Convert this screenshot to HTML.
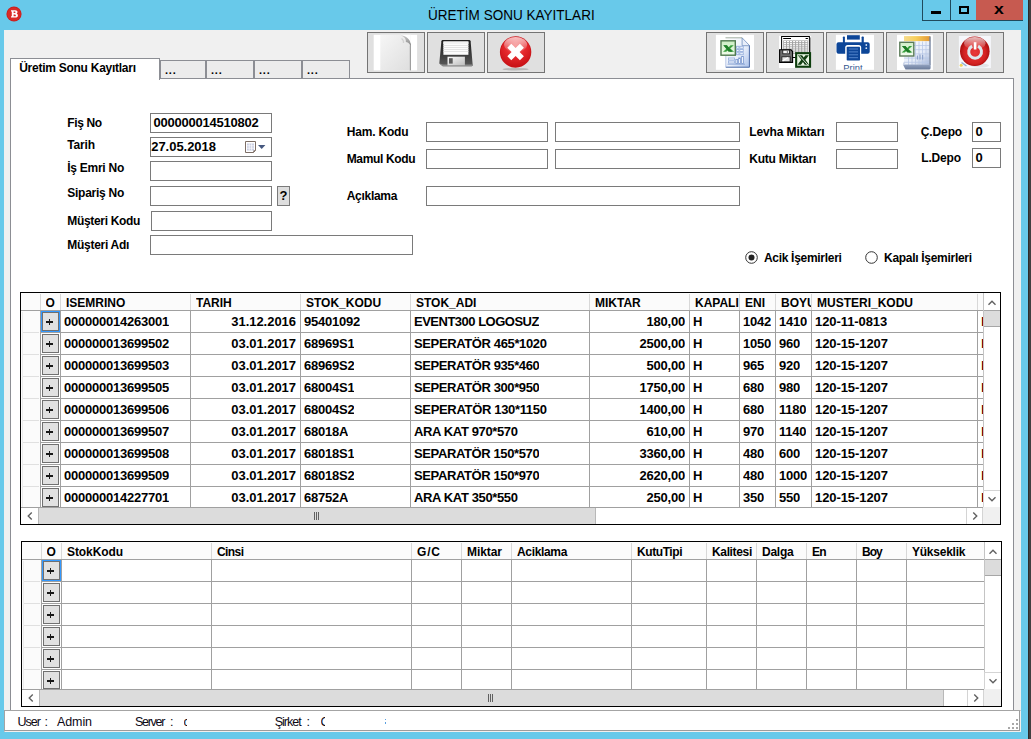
<!DOCTYPE html>
<html><head><meta charset="utf-8">
<style>
*{box-sizing:border-box;margin:0;padding:0}
html,body{width:1031px;height:739px;overflow:hidden}
body{background:#68c9ea;font-family:"Liberation Sans",sans-serif;position:relative;color:#000}
.abs,.abs *{position:absolute}
#win{position:absolute;left:0;top:0;width:1031px;height:739px;overflow:hidden}
#win div,#win span,#win svg{position:absolute}
#title{left:428px;top:4.600px;font-size:15.500px;line-height:20px;white-space:nowrap;color:#000;transform-origin:0 0;transform:scaleX(0.873)}
#client{left:4px;top:29.600px;width:1017px;height:702.400px;background:#f0f0f0}
#edge{left:1028px;top:0;width:3px;height:739px;background:#404040;border-left:1px solid #2b2b2b}
.cap{top:0;height:21px;border:1px solid #1f4a5c;border-top:none}
.tb{top:32px;width:58px;height:41px;background:#e0e0e0;border:1px solid #747474}
.tab{top:60px;height:18px;background:#ececec;border:1px solid #8c8e94;border-bottom:none;font-size:11px;font-weight:bold}
#page{left:10px;top:78px;width:1004px;height:634px;background:#fff;border:1px solid #8c8e94}
.lbl{font-size:12px;font-weight:bold;line-height:14px;white-space:nowrap}
.inp{background:#fff;border:1px solid #7a7a7a;height:20px;font-size:13px;font-weight:bold;line-height:17px;padding-left:2.400px;letter-spacing:-0.23px;white-space:nowrap;overflow:hidden}
.grid{background:#fff;border:1px solid #000}
.gt{height:16px;line-height:16px;font-weight:bold;white-space:nowrap;overflow:hidden}
.gh{top:0;height:17px;background:#fafafa;border-right:1px solid #b4b4b4;border-bottom:1px solid #a0a0a0;font-weight:bold;white-space:nowrap;overflow:hidden}
.hl{height:1px;background:#a0a0a0;left:0}
.vl{width:1px;background:#a0a0a0}
.c{font-size:13px;font-weight:bold;line-height:22px;white-space:nowrap;height:21px;letter-spacing:-0.23px;overflow:hidden}
.pb{width:17px;height:18px;background:#e1e1e1;border:1px solid #707070;font-size:11px;font-weight:bold;text-align:center;line-height:16px}
#status{left:4px;top:710px;width:1017px;height:22px;background:#fff;border:1px solid #a4a4a4;border-right:1px solid #f4efed;border-bottom:1px solid #f4efed;box-shadow:inset -1px -1px 0 #9c9c9c}
.st{font-size:12.500px;line-height:14px;top:3.500px;white-space:nowrap;color:#0c0814}
</style></head><body>
<div id="win">
<div id="edge"></div>
<!-- titlebar -->
<svg style="left:6px;top:6px" width="16" height="16" viewBox="0 0 16 16"><circle cx="8" cy="8" r="7.6" fill="#c9201f"/><circle cx="8" cy="8" r="6.6" fill="#d92b27"/><path d="M5 4.2h4.2c1.5 0 2.3.7 2.3 1.8 0 .8-.4 1.4-1.2 1.6 1 .2 1.6.9 1.6 1.9 0 1.400-1 2.1-2.600 2.100H5v-1.3h.8V5.500H5z M7.600 5.600v1.500h1.100c.6 0 .9-.3.9-.8s-.3-.7-.9-.7z M7.600 8.500v1.800h1.300c.7 0 1-.4 1-.9 0-.6-.4-.9-1.100-.9z" fill="#fff" fill-rule="evenodd"/></svg>
<div id="title">ÜRETİM SONU KAYITLARI</div>
<div class="cap" style="left:922px;width:29px"><div style="left:8px;top:11px;width:10px;height:3px;background:#000"></div></div>
<div class="cap" style="left:950px;width:27px"><div style="left:8px;top:6px;width:10px;height:8px;border:2px solid #000"></div></div>
<div class="cap" style="left:976px;width:47px;background:#c75a50;border-left:none;border-right:none"><div style="left:18.500px;top:0px;font-size:14.500px;font-weight:bold;line-height:18px;transform:scaleX(1.22)">x</div></div>
<div id="client"></div>
<div class="tb" style="left:367px"><svg style="left:-1px;top:-1px" width="58" height="41" viewBox="0 0 58 41"><defs><linearGradient id="pg0" x1="0" y1="0" x2="1" y2="1"><stop offset="0" stop-color="#f6f6f6"/><stop offset="1" stop-color="#dedede"/></linearGradient><linearGradient id="cl0" x1="0" y1="0" x2="1" y2="1"><stop offset="0" stop-color="#c8c8c8"/><stop offset="1" stop-color="#7a7a7a"/></linearGradient></defs>
<rect x="6.700" y="2.800" width="43.400" height="35.600" fill="#fff"/>
<rect x="13.300" y="2.800" width="30.300" height="35.600" fill="url(#pg0)"/>
<path d="M34 2.800H43.600V12z" fill="#fff"/>
<path d="M33.800 3.200C38 3.600 43.200 6.500 43.600 11.800L43.600 13.500C41.800 10.800 40.500 10.200 38.800 10C39.500 7.500 37.500 4.800 33.800 3.200z" fill="url(#cl0)" opacity="0.850"/>
<path d="M34.500 6.500C36 7.500 36.800 9 36.500 11" stroke="#d0d0d0" stroke-width="1.200" fill="none"/>
<rect x="42.900" y="11.500" width="0.900" height="26.900" fill="#8c8c8c"/>
<rect x="42" y="14" width="0.900" height="24.400" fill="#d4d4d4"/>
</svg></div>
<div class="tb" style="left:427px"><svg style="left:-1px;top:-1px" width="58" height="41" viewBox="0 0 58 41"><defs><linearGradient id="fb" x1="0" y1="0" x2="0" y2="1"><stop offset="0" stop-color="#1e1e1e"/><stop offset="0.550" stop-color="#3c3c3c"/><stop offset="1" stop-color="#5a5a5a"/></linearGradient><linearGradient id="fs" x1="0" y1="0" x2="1" y2="1"><stop offset="0" stop-color="#fafafa"/><stop offset="1" stop-color="#bdbdbd"/></linearGradient></defs>
<path d="M15.600 8.100H42.200Q43.400 8.100 43.600 9.300L45.700 33Q45.800 34.300 44.500 34.300H15.800L12.300 31.500L14.400 9.300Q14.600 8.100 15.600 8.100z" fill="url(#fb)"/>
<path d="M12.300 31.500L15.800 34.300H44.500Q45.800 34.300 45.700 33L45.600 32.400H15.900z" fill="#8a8a8a"/>
<rect x="16.400" y="9.500" width="25" height="13.300" fill="#fcfcfc"/>
<path d="M16.400 13.500h25M16.400 15.500h25M16.400 17.500h25M16.400 19.500h25" stroke="#dcdcdc" stroke-width="0.800"/>
<rect x="16.400" y="9.500" width="25" height="2.500" fill="#f2f2f2"/>
<rect x="20.500" y="24.700" width="17.400" height="8.600" fill="url(#fs)"/>
<rect x="22" y="26.200" width="3.700" height="5.400" fill="#5c5c5c"/>
</svg></div>
<div class="tb" style="left:487px"><svg style="left:-1px;top:-1px" width="58" height="41" viewBox="0 0 58 41"><defs><radialGradient id="rx" cx="0.500" cy="0.300" r="0.750"><stop offset="0" stop-color="#f47a7a"/><stop offset="0.450" stop-color="#e62a2e"/><stop offset="1" stop-color="#c40d12"/></radialGradient><linearGradient id="rxh" x1="0" y1="0" x2="0" y2="1"><stop offset="0" stop-color="#fff" stop-opacity="0.700"/><stop offset="1" stop-color="#fff" stop-opacity="0.050"/></linearGradient></defs>
<ellipse cx="28.600" cy="37.200" rx="13" ry="1.300" fill="#b8b8b8"/>
<circle cx="28.600" cy="20" r="15.700" fill="#c9151a"/>
<circle cx="28.600" cy="20" r="14.900" fill="url(#rx)"/>
<ellipse cx="28.600" cy="12.500" rx="11.500" ry="7.500" fill="url(#rxh)"/>
<path d="M20.3 15.7L24.3 11.7L28.6 16.0L32.9 11.7L36.9 15.7L32.6 20.0L36.9 24.3L32.9 28.3L28.6 24.0L24.3 28.3L20.3 24.3L24.6 20.0z" fill="#fff"/>
</svg></div>
<div class="tb" style="left:706px"><svg style="left:-1px;top:-1px" width="58" height="41" viewBox="0 0 58 41"><defs><linearGradient id="xp" x1="0" y1="0" x2="1" y2="1"><stop offset="0" stop-color="#ffffff"/><stop offset="0.550" stop-color="#eaf0fb"/><stop offset="1" stop-color="#a9c0ea"/></linearGradient><linearGradient id="xg" x1="0" y1="0" x2="0" y2="1"><stop offset="0" stop-color="#cdeec4"/><stop offset="1" stop-color="#effbe9"/></linearGradient></defs>
<rect x="9.900" y="2.800" width="38.100" height="35" fill="#fff"/>
<path d="M19.500 5.800H36.100L43.700 13.700V35.500H19.500z" fill="url(#xp)"/>
<path d="M36.100 5.800V13.700H43.700z" fill="#e8eefa" stroke="#5f7fb5" stroke-width="0.700"/>
<path d="M19.500 5.800H36.100" stroke="#8a9a8a" stroke-width="0.800"/>
<path d="M43.400 13.700V35.200H19.800" stroke="#4b6aa5" stroke-width="1" fill="none"/>
<path d="M19.800 23.900V35.200" stroke="#9fb5dd" stroke-width="0.700"/>
<g stroke="#9ab2de" stroke-width="0.900" fill="#f4f8ff"><rect x="30.500" y="14.300" width="2.500" height="2"/><rect x="33.800" y="14.300" width="3.500" height="2"/><rect x="30.500" y="17.500" width="2.500" height="2"/><rect x="33.800" y="17.500" width="3.500" height="2"/><rect x="30.500" y="20.700" width="2.500" height="2"/><rect x="33.800" y="20.700" width="3.500" height="2"/><rect x="22.500" y="26" width="6" height="2"/><rect x="22.500" y="29" width="6" height="2"/></g>
<g fill="#eef3fc" stroke="#7f9bd0" stroke-width="0.800"><rect x="29.800" y="27.500" width="1.800" height="4"/><rect x="32.600" y="26" width="1.800" height="5.500"/><rect x="35.600" y="24.500" width="1.800" height="7"/></g>
<path d="M21.500 32.200H39" stroke="#7f9bd0" stroke-width="0.800"/>
<rect x="14.300" y="8.100" width="15.700" height="15.800" fill="#4f7a4f"/>
<rect x="15.700" y="9.500" width="12.900" height="13" fill="url(#xg)"/>
<g transform="translate(0 3.600) scale(1 0.780)"><path d="M17.300 12.500h3.600l1.700 2.300 2-2.300h3.200l-3.600 4 3.900 4.300h-3.700l-2-2.500-2.200 2.500h-3.200l3.800-4.300z" fill="#3aa040"/>
<path d="M17.300 12.500h3.600l5.400 8.300h-3.700z" fill="#1f8028"/></g>
</svg></div>
<div class="tb" style="left:766px"><svg style="left:-1px;top:-1px" width="58" height="41" viewBox="0 0 58 41">
<rect x="13.100" y="3.800" width="32" height="32.200" fill="#fff"/>
<rect x="15.600" y="4.500" width="27.800" height="21" fill="#fff" stroke="#000" stroke-width="1"/>
<path d="M44.400 5.500V25" stroke="#777" stroke-width="0.800"/>
<rect x="17.200" y="6" width="7.800" height="1" fill="#000"/><rect x="39.600" y="6" width="2.300" height="1" fill="#000"/>
<rect x="17.200" y="8.400" width="24.700" height="13.400" fill="#a4a4a4"/>
<g fill="#fff"><rect x="18" y="9" width="2" height="1.200"/><rect x="21" y="9" width="2" height="1.200"/><rect x="24" y="9" width="2" height="1.200"/><rect x="27.100" y="9" width="2" height="1.200"/><rect x="30.100" y="9" width="2" height="1.200"/><rect x="33.200" y="9" width="2" height="1.200"/><rect x="36.200" y="9" width="2" height="1.200"/><rect x="39.300" y="9" width="2" height="1.200"/>
<rect x="18" y="11.100" width="2" height="1.200"/><rect x="21" y="11.100" width="2" height="1.200"/><rect x="24" y="11.100" width="2" height="1.200"/><rect x="27.100" y="11.100" width="2" height="1.200"/><rect x="30.100" y="11.100" width="2" height="1.200"/><rect x="33.200" y="11.100" width="2" height="1.200"/><rect x="36.200" y="11.100" width="2" height="1.200"/><rect x="39.300" y="11.100" width="2" height="1.200"/>
<rect x="18" y="13.200" width="2" height="1.200"/><rect x="21" y="13.200" width="2" height="1.200"/><rect x="24" y="13.200" width="2" height="1.200"/><rect x="27.100" y="13.200" width="2" height="1.200"/><rect x="30.100" y="13.200" width="2" height="1.200"/><rect x="33.200" y="13.200" width="2" height="1.200"/><rect x="36.200" y="13.200" width="2" height="1.200"/><rect x="39.300" y="13.200" width="2" height="1.200"/>
<rect x="18" y="15.300" width="2" height="1.200"/><rect x="21" y="15.300" width="2" height="1.200"/><rect x="24" y="15.300" width="2" height="1.200"/><rect x="27.100" y="15.300" width="2" height="1.200"/><rect x="30.100" y="15.300" width="2" height="1.200"/><rect x="33.200" y="15.300" width="2" height="1.200"/><rect x="36.200" y="15.300" width="2" height="1.200"/><rect x="39.300" y="15.300" width="2" height="1.200"/>
<rect x="27.100" y="17.400" width="2" height="1.200"/><rect x="30.100" y="17.400" width="2" height="1.200"/><rect x="33.200" y="17.400" width="2" height="1.200"/><rect x="36.200" y="17.400" width="2" height="1.200"/><rect x="39.300" y="17.400" width="2" height="1.200"/>
<rect x="27.100" y="19.500" width="2" height="1.200"/><rect x="30.100" y="19.500" width="2" height="1.200"/><rect x="33.200" y="19.500" width="2" height="1.200"/><rect x="36.200" y="19.500" width="2" height="1.200"/><rect x="39.300" y="19.500" width="2" height="1.200"/></g>
<path d="M13.600 17.700H24.800L26.600 19.500V30.400H13.600z" fill="#6e6e6e" stroke="#000" stroke-width="1.100"/>
<rect x="16.800" y="18.100" width="6.600" height="3.700" fill="#f4f4f4" stroke="#111" stroke-width="0.800"/>
<rect x="20.800" y="18.600" width="1.300" height="2.500" fill="#888"/>
<rect x="15.900" y="24.800" width="8.200" height="5" fill="#e4e4e4" stroke="#111" stroke-width="0.800"/>
<path d="M16.500 29L22 25.500" stroke="#fff" stroke-width="1.200"/>
<rect x="29.100" y="20.100" width="16" height="15.700" fill="#0d3d0d"/>
<rect x="31.200" y="22.200" width="11.800" height="11.500" fill="#e9f7e4"/>
<path d="M31.800 23.200h4.300l1.600 2.300 1.800-2.300h3.400l-3.500 4.500 3.600 5h-4.300l-1.700-2.600-2 2.600h-3.500l3.800-5z" fill="#123f12"/>
<path d="M33.200 23.400L41.800 33" stroke="#fff" stroke-width="0.800"/>
</svg></div>
<div class="tb" style="left:826px"><svg style="left:-1px;top:-1px" width="58" height="41" viewBox="0 0 58 41">
<rect x="9.900" y="2.800" width="38.100" height="35" fill="#fff"/>
<g fill="#0d4698">
<rect x="21" y="3.200" width="12.800" height="4.400"/>
<rect x="16.900" y="4.400" width="2" height="7" rx="0.800"/><rect x="35.600" y="4.400" width="2.200" height="7" rx="0.800"/>
<path d="M12.500 10.200H41.700Q43.700 10.200 43.700 12.200V19.800Q43.700 21.800 41.700 21.800H35.200V15.600Q35.200 13.100 32.700 13.100H21.700Q19.200 13.100 19.200 15.600V21.800H12.500Q10.500 21.800 10.500 19.800V12.200Q10.500 10.200 12.500 10.200z"/>
<rect x="20.700" y="14.800" width="13.300" height="13.700" rx="0.800"/>
</g>
<g stroke="#5f8fd4" stroke-width="1" opacity="0.850"><path d="M22.800 17h9.200M22.800 19.900h9.200M22.800 22.800h9.200M22.800 25.700h9.200"/></g>
<circle cx="40.300" cy="13" r="0.900" fill="#d6e2f4"/><circle cx="40.300" cy="16.200" r="0.900" fill="#d6e2f4"/>
<clipPath id="pc"><rect x="9.900" y="2.800" width="38.100" height="35"/></clipPath>
<text x="17.300" y="39" font-family="Liberation Sans, sans-serif" font-size="9.400" fill="#35568f" clip-path="url(#pc)">Print</text>
</svg></div>
<div class="tb" style="left:886px"><svg style="left:-1px;top:-1px" width="58" height="41" viewBox="0 0 58 41"><defs><linearGradient id="og" x1="0" y1="0" x2="1" y2="0"><stop offset="0" stop-color="#f6dc8c"/><stop offset="0.450" stop-color="#f7cf5c"/><stop offset="1" stop-color="#e39834"/></linearGradient><linearGradient id="tg" x1="0" y1="0" x2="1" y2="1"><stop offset="0" stop-color="#ffffff"/><stop offset="0.600" stop-color="#e6ecf8"/><stop offset="1" stop-color="#a8b8d8"/></linearGradient><linearGradient id="bg6" x1="0" y1="0" x2="0" y2="1"><stop offset="0" stop-color="#93a3c1"/><stop offset="1" stop-color="#6a7a98"/></linearGradient><linearGradient id="xg2" x1="0" y1="0" x2="0" y2="1"><stop offset="0" stop-color="#d2efc9"/><stop offset="1" stop-color="#f1fbec"/></linearGradient></defs>
<rect x="11" y="2.800" width="35.900" height="35.300" fill="#fff"/>
<rect x="18" y="4.100" width="26.200" height="5.300" fill="url(#og)"/>
<rect x="18" y="9.300" width="25.600" height="23.400" fill="url(#tg)"/>
<g stroke="#b9c8e6" stroke-width="0.800" fill="none"><path d="M18 13.500h25.400M18 17.700h25.400M18 21.900h25.400M18 26.100h25.400M18 30.300h25.400"/><path d="M29.500 9.500v23M33 9.500v23M36.500 9.500v23M40 9.500v23M22.500 25v8M26 25v8"/></g>
<path d="M30.800 23.500h1.200v4h-1.200zM33.400 22.500h1.200v5h-1.200zM36 23h1.200v4.500H36z" fill="#8fa3cc"/>
<path d="M43.300 4.400H44.700V33H43.300z" fill="#76849f"/>
<path d="M16.900 32.600H44.600V36Q44.600 37.500 43 37.500H19.500z" fill="url(#bg6)"/>
<path d="M18 29.500L16.700 32.600H19z" fill="#c5cfe4"/>
<rect x="13.100" y="9.600" width="15.400" height="15.100" fill="#5a7a58"/>
<rect x="14.500" y="11" width="12.600" height="12.300" fill="url(#xg2)"/>
<g transform="translate(0 3.400) scale(1 0.800)"><path d="M16 13.300h3.400l1.800 2.300 2-2.300h3l-3.600 4 3.900 4.200h-3.600l-2-2.500-2.200 2.500h-3.100l3.800-4.200z" fill="#38a03e"/>
<path d="M16 13.300h3.400l5.500 8.200h-3.600z" fill="#1d7a24"/></g>
</svg></div>
<div class="tb" style="left:946px"><svg style="left:-1px;top:-1px" width="58" height="41" viewBox="0 0 58 41"><defs><radialGradient id="pr" cx="0.500" cy="0.550" r="0.550"><stop offset="0" stop-color="#e83a3a"/><stop offset="0.700" stop-color="#d42222"/><stop offset="1" stop-color="#a30f0f"/></radialGradient><linearGradient id="prh" x1="0" y1="0" x2="0" y2="1"><stop offset="0" stop-color="#fff" stop-opacity="0.750"/><stop offset="1" stop-color="#fff" stop-opacity="0"/></linearGradient></defs>
<rect x="12.900" y="4" width="32" height="32.100" fill="#f5f7fb"/>
<ellipse cx="34" cy="33.500" rx="9" ry="2" fill="#e2e4e8"/>
<path d="M15.500 30.500L20.500 34" stroke="#8fb0d8" stroke-width="1.500"/>
<circle cx="15.200" cy="33.300" r="1.500" fill="#efd45a"/>
<circle cx="28.800" cy="19.300" r="14.800" fill="#b81212"/>
<circle cx="28.800" cy="19.300" r="14" fill="url(#pr)"/>
<ellipse cx="28.800" cy="11.300" rx="10.800" ry="6.300" fill="url(#prh)"/>
<path d="M26.100 14.150A6.400 6.400 0 1 0 32.100 14.150" fill="none" stroke="#dde9ee" stroke-width="3" stroke-linecap="butt"/>
<rect x="27.800" y="10.200" width="2.600" height="7.300" fill="#fff"/>
</svg></div>
<div id="page"></div>
<div class="tab" style="left:160px;width:46px"><span style="left:4px;top:2px;line-height:14px;letter-spacing:0.8px">...</span></div>
<div class="tab" style="left:206px;width:48px"><span style="left:4px;top:2px;line-height:14px;letter-spacing:0.8px">...</span></div>
<div class="tab" style="left:254px;width:48px"><span style="left:4px;top:2px;line-height:14px;letter-spacing:0.8px">...</span></div>
<div class="tab" style="left:302px;width:48px"><span style="left:4px;top:2px;line-height:14px;letter-spacing:0.8px">...</span></div>
<div class="tab" style="left:10px;top:58px;width:150px;height:22px;background:#fff;z-index:2"><span style="left:8.200px;top:2px;line-height:14px;font-size:12px;letter-spacing:-0.26px;white-space:nowrap">Üretim Sonu Kayıtları</span></div>
<div class="lbl" style="left:67.3px;top:116px;letter-spacing:-0.38px">Fiş No</div>
<div class="lbl" style="left:67.3px;top:138px;letter-spacing:-0.19px">Tarih</div>
<div class="lbl" style="left:67.3px;top:161px;letter-spacing:-0.27px">İş Emri No</div>
<div class="lbl" style="left:67.3px;top:186px;letter-spacing:-0.27px">Sipariş No</div>
<div class="lbl" style="left:67.3px;top:214px;letter-spacing:-0.33px">Müşteri Kodu</div>
<div class="lbl" style="left:67.3px;top:238px;letter-spacing:-0.28px">Müşteri Adı</div>
<div class="lbl" style="left:346.7px;top:125px;letter-spacing:-0.18px">Ham. Kodu</div>
<div class="lbl" style="left:346.7px;top:152px;letter-spacing:-0.34px">Mamul Kodu</div>
<div class="lbl" style="left:346.7px;top:189px;letter-spacing:-0.29px">Açıklama</div>
<div class="lbl" style="left:749.2px;top:125px;letter-spacing:-0.11px">Levha Miktarı</div>
<div class="lbl" style="left:749.2px;top:152px;letter-spacing:-0.21px">Kutu Miktarı</div>
<div class="lbl" style="left:920.7px;top:125px;letter-spacing:-0.10px">Ç.Depo</div>
<div class="lbl" style="left:921.3px;top:151px;letter-spacing:-0.20px">L.Depo</div>
<div class="lbl" style="left:763.9px;top:251px;letter-spacing:-0.29px">Acik İşemirleri</div>
<div class="lbl" style="left:884.1px;top:251px;letter-spacing:-0.30px">Kapalı İşemirleri</div>
<div class="inp" style="left:150px;top:113px;width:122px">000000014510802</div>
<div class="inp" style="left:150px;top:137px;width:122px"><span style="position:static;margin-left:-2.2px;letter-spacing:-0.03px">27.05.2018</span></div>
<div class="inp" style="left:150px;top:161px;width:122px"></div>
<div class="inp" style="left:150px;top:186px;width:122px"></div>
<div class="inp" style="left:151px;top:211px;width:121px"></div>
<div class="inp" style="left:150px;top:235px;width:263px"></div>
<div class="inp" style="left:426px;top:122px;width:122px"></div>
<div class="inp" style="left:555px;top:122px;width:185px"></div>
<div class="inp" style="left:426px;top:149px;width:122px"></div>
<div class="inp" style="left:555px;top:149px;width:185px"></div>
<div class="inp" style="left:426px;top:186px;width:314px"></div>
<div class="inp" style="left:836px;top:122px;width:62px"></div>
<div class="inp" style="left:836px;top:149px;width:62px"></div>
<div class="inp" style="left:972px;top:122px;width:29px">0</div>
<div class="inp" style="left:972px;top:148px;width:29px">0</div>
<svg style="left:244px;top:140px" width="24" height="14" viewBox="0 0 24 14"><path d="M1.500 1.500H11.500V10.500L9.500 12.500H1.500z" fill="#fff" stroke="#7d6e66" stroke-width="1"/><path d="M9.500 12.500V10.500H11.500" fill="none" stroke="#7d6e66" stroke-width="0.800"/><rect x="3" y="3.500" width="7" height="7" fill="#c9cde2"/><path d="M5.200 3.500v7M7.600 3.500v7M3 5.800h7M3 8.200h7" stroke="#fff" stroke-width="0.700"/><path d="M14 5h7.400l-3.700 4z" fill="#46587f"/></svg>
<div style="left:277px;top:186px;width:13px;height:20px;background:#dedede;border:1px solid #7a7a7a;font-size:13px;font-weight:bold;line-height:18px;text-align:center"><span style="left:1.500px;top:0">?</span></div>
<svg style="left:744.500px;top:250.500px" width="13" height="13" viewBox="0 0 13 13"><circle cx="6.500" cy="6.500" r="5.800" fill="#fff" stroke="#333" stroke-width="1"/><circle cx="6.500" cy="6.500" r="3" fill="#222"/></svg>
<svg style="left:864.500px;top:250.500px" width="13" height="13" viewBox="0 0 13 13"><circle cx="6.500" cy="6.500" r="5.800" fill="#fff" stroke="#333" stroke-width="1"/></svg>
<div class="grid" style="left:20px;top:292px;width:981px;height:233px"></div>
<div style="left:21px;top:293px;width:962px;height:17px;background:#fbfbfb"></div>
<div style="left:21px;top:310px;width:978px;height:1px;background:#a0a0a0"></div>
<div style="left:21px;top:311px;width:19px;height:196px;background:#fbfbfb"></div>
<div style="left:22px;top:312px;width:1px;height:195px;background:#ececec"></div>
<div style="left:40px;top:294px;width:1px;height:16px;background:#d8d8d8"></div>
<div style="left:40px;top:311px;width:1px;height:196px;background:#a0a0a0"></div>
<div style="left:60px;top:294px;width:1px;height:16px;background:#d8d8d8"></div>
<div style="left:60px;top:311px;width:1px;height:196px;background:#a0a0a0"></div>
<div class="gt" style="left:45.5px;top:295px;width:14.5px;font-size:12px">O</div>
<div style="left:190px;top:294px;width:1px;height:16px;background:#d8d8d8"></div>
<div style="left:190px;top:311px;width:1px;height:196px;background:#a0a0a0"></div>
<div class="gt" style="left:66px;top:295px;width:124px;font-size:12px">ISEMRINO</div>
<div style="left:300px;top:294px;width:1px;height:16px;background:#d8d8d8"></div>
<div style="left:300px;top:311px;width:1px;height:196px;background:#a0a0a0"></div>
<div class="gt" style="left:196px;top:295px;width:104px;font-size:12px">TARIH</div>
<div style="left:410px;top:294px;width:1px;height:16px;background:#d8d8d8"></div>
<div style="left:410px;top:311px;width:1px;height:196px;background:#a0a0a0"></div>
<div class="gt" style="left:306px;top:295px;width:104px;font-size:12px">STOK_KODU</div>
<div style="left:589px;top:294px;width:1px;height:16px;background:#d8d8d8"></div>
<div style="left:589px;top:311px;width:1px;height:196px;background:#a0a0a0"></div>
<div class="gt" style="left:416px;top:295px;width:173px;font-size:12px">STOK_ADI</div>
<div style="left:689px;top:294px;width:1px;height:16px;background:#d8d8d8"></div>
<div style="left:689px;top:311px;width:1px;height:196px;background:#a0a0a0"></div>
<div class="gt" style="left:595px;top:295px;width:94px;font-size:12px">MIKTAR</div>
<div style="left:739px;top:294px;width:1px;height:16px;background:#d8d8d8"></div>
<div style="left:739px;top:311px;width:1px;height:196px;background:#a0a0a0"></div>
<div class="gt" style="left:695px;top:295px;width:44px;font-size:12px">KAPALI</div>
<div style="left:775px;top:294px;width:1px;height:16px;background:#d8d8d8"></div>
<div style="left:775px;top:311px;width:1px;height:196px;background:#a0a0a0"></div>
<div class="gt" style="left:745px;top:295px;width:30px;font-size:12px">ENI</div>
<div style="left:811px;top:294px;width:1px;height:16px;background:#d8d8d8"></div>
<div style="left:811px;top:311px;width:1px;height:196px;background:#a0a0a0"></div>
<div class="gt" style="left:781px;top:295px;width:30px;font-size:12px">BOYU</div>
<div style="left:977px;top:294px;width:1px;height:16px;background:#d8d8d8"></div>
<div style="left:977px;top:311px;width:1px;height:196px;background:#a0a0a0"></div>
<div class="gt" style="left:817px;top:295px;width:160px;font-size:12px">MUSTERI_KODU</div>
<div style="left:40px;top:332px;width:943px;height:1px;background:#a0a0a0"></div>
<div style="left:23px;top:332px;width:16px;height:1px;background:#e0e0e0"></div>
<div class="pb" style="left:42px;top:312px;height:19px"><div style="left:3px;top:8.200px;width:7px;height:1.600px;background:#181818"></div><div style="left:5.700px;top:6px;width:1.600px;height:6px;background:#181818"></div></div>
<div class="c" style="left:64px;top:311px;height:21px">000000014263001</div>
<div class="c" style="left:191px;width:105px;top:311px;text-align:right;height:21px"><span style="position:static;letter-spacing:-0.03px">31.12.2016</span></div>
<div class="c" style="left:304px;top:311px;height:21px">95401092</div>
<div class="c" style="left:414px;top:311px;height:21px"><span style="position:static;letter-spacing:-0.50px">EVENT300 LOGOSUZ</span></div>
<div class="c" style="left:590px;width:95px;top:311px;text-align:right;height:21px">180,00</div>
<div class="c" style="left:693px;top:311px;height:21px">H</div>
<div class="c" style="left:743px;top:311px;height:21px">1042</div>
<div class="c" style="left:779px;top:311px;height:21px">1410</div>
<div class="c" style="left:815px;top:311px;height:21px"><span style="position:static;letter-spacing:-0.08px">120-11-0813</span></div>
<div style="left:982px;top:317px;width:1px;height:9px;background:#8b0a0a"></div><div style="left:981px;top:317px;width:1px;height:9px;background:#f2e9a0"></div>
<div style="left:40px;top:354px;width:943px;height:1px;background:#a0a0a0"></div>
<div style="left:23px;top:354px;width:16px;height:1px;background:#e0e0e0"></div>
<div class="pb" style="left:42px;top:334px;height:19px"><div style="left:3px;top:8.200px;width:7px;height:1.600px;background:#181818"></div><div style="left:5.700px;top:6px;width:1.600px;height:6px;background:#181818"></div></div>
<div class="c" style="left:64px;top:333px;height:21px">000000013699502</div>
<div class="c" style="left:191px;width:105px;top:333px;text-align:right;height:21px"><span style="position:static;letter-spacing:-0.03px">03.01.2017</span></div>
<div class="c" style="left:304px;top:333px;height:21px">68969S1</div>
<div class="c" style="left:414px;top:333px;height:21px"><span style="position:static;letter-spacing:-0.37px">SEPERATÖR 465*1020</span></div>
<div class="c" style="left:590px;width:95px;top:333px;text-align:right;height:21px">2500,00</div>
<div class="c" style="left:693px;top:333px;height:21px">H</div>
<div class="c" style="left:743px;top:333px;height:21px">1050</div>
<div class="c" style="left:779px;top:333px;height:21px">960</div>
<div class="c" style="left:815px;top:333px;height:21px"><span style="position:static;letter-spacing:-0.08px">120-15-1207</span></div>
<div style="left:982px;top:339px;width:1px;height:9px;background:#8b0a0a"></div><div style="left:981px;top:339px;width:1px;height:9px;background:#f2e9a0"></div>
<div style="left:40px;top:376px;width:943px;height:1px;background:#a0a0a0"></div>
<div style="left:23px;top:376px;width:16px;height:1px;background:#e0e0e0"></div>
<div class="pb" style="left:42px;top:356px;height:19px"><div style="left:3px;top:8.200px;width:7px;height:1.600px;background:#181818"></div><div style="left:5.700px;top:6px;width:1.600px;height:6px;background:#181818"></div></div>
<div class="c" style="left:64px;top:355px;height:21px">000000013699503</div>
<div class="c" style="left:191px;width:105px;top:355px;text-align:right;height:21px"><span style="position:static;letter-spacing:-0.03px">03.01.2017</span></div>
<div class="c" style="left:304px;top:355px;height:21px">68969S2</div>
<div class="c" style="left:414px;top:355px;height:21px"><span style="position:static;letter-spacing:-0.39px">SEPERATÖR 935*460</span></div>
<div class="c" style="left:590px;width:95px;top:355px;text-align:right;height:21px">500,00</div>
<div class="c" style="left:693px;top:355px;height:21px">H</div>
<div class="c" style="left:743px;top:355px;height:21px">965</div>
<div class="c" style="left:779px;top:355px;height:21px">920</div>
<div class="c" style="left:815px;top:355px;height:21px"><span style="position:static;letter-spacing:-0.08px">120-15-1207</span></div>
<div style="left:982px;top:361px;width:1px;height:9px;background:#8b0a0a"></div><div style="left:981px;top:361px;width:1px;height:9px;background:#f2e9a0"></div>
<div style="left:40px;top:398px;width:943px;height:1px;background:#a0a0a0"></div>
<div style="left:23px;top:398px;width:16px;height:1px;background:#e0e0e0"></div>
<div class="pb" style="left:42px;top:378px;height:19px"><div style="left:3px;top:8.200px;width:7px;height:1.600px;background:#181818"></div><div style="left:5.700px;top:6px;width:1.600px;height:6px;background:#181818"></div></div>
<div class="c" style="left:64px;top:377px;height:21px">000000013699505</div>
<div class="c" style="left:191px;width:105px;top:377px;text-align:right;height:21px"><span style="position:static;letter-spacing:-0.03px">03.01.2017</span></div>
<div class="c" style="left:304px;top:377px;height:21px">68004S1</div>
<div class="c" style="left:414px;top:377px;height:21px"><span style="position:static;letter-spacing:-0.39px">SEPERATÖR 300*950</span></div>
<div class="c" style="left:590px;width:95px;top:377px;text-align:right;height:21px">1750,00</div>
<div class="c" style="left:693px;top:377px;height:21px">H</div>
<div class="c" style="left:743px;top:377px;height:21px">680</div>
<div class="c" style="left:779px;top:377px;height:21px">980</div>
<div class="c" style="left:815px;top:377px;height:21px"><span style="position:static;letter-spacing:-0.08px">120-15-1207</span></div>
<div style="left:982px;top:383px;width:1px;height:9px;background:#8b0a0a"></div><div style="left:981px;top:383px;width:1px;height:9px;background:#f2e9a0"></div>
<div style="left:40px;top:420px;width:943px;height:1px;background:#a0a0a0"></div>
<div style="left:23px;top:420px;width:16px;height:1px;background:#e0e0e0"></div>
<div class="pb" style="left:42px;top:400px;height:19px"><div style="left:3px;top:8.200px;width:7px;height:1.600px;background:#181818"></div><div style="left:5.700px;top:6px;width:1.600px;height:6px;background:#181818"></div></div>
<div class="c" style="left:64px;top:399px;height:21px">000000013699506</div>
<div class="c" style="left:191px;width:105px;top:399px;text-align:right;height:21px"><span style="position:static;letter-spacing:-0.03px">03.01.2017</span></div>
<div class="c" style="left:304px;top:399px;height:21px">68004S2</div>
<div class="c" style="left:414px;top:399px;height:21px"><span style="position:static;letter-spacing:-0.33px">SEPERATÖR 130*1150</span></div>
<div class="c" style="left:590px;width:95px;top:399px;text-align:right;height:21px">1400,00</div>
<div class="c" style="left:693px;top:399px;height:21px">H</div>
<div class="c" style="left:743px;top:399px;height:21px">680</div>
<div class="c" style="left:779px;top:399px;height:21px">1180</div>
<div class="c" style="left:815px;top:399px;height:21px"><span style="position:static;letter-spacing:-0.08px">120-15-1207</span></div>
<div style="left:982px;top:405px;width:1px;height:9px;background:#8b0a0a"></div><div style="left:981px;top:405px;width:1px;height:9px;background:#f2e9a0"></div>
<div style="left:40px;top:442px;width:943px;height:1px;background:#a0a0a0"></div>
<div style="left:23px;top:442px;width:16px;height:1px;background:#e0e0e0"></div>
<div class="pb" style="left:42px;top:422px;height:19px"><div style="left:3px;top:8.200px;width:7px;height:1.600px;background:#181818"></div><div style="left:5.700px;top:6px;width:1.600px;height:6px;background:#181818"></div></div>
<div class="c" style="left:64px;top:421px;height:21px">000000013699507</div>
<div class="c" style="left:191px;width:105px;top:421px;text-align:right;height:21px"><span style="position:static;letter-spacing:-0.03px">03.01.2017</span></div>
<div class="c" style="left:304px;top:421px;height:21px">68018A</div>
<div class="c" style="left:414px;top:421px;height:21px"><span style="position:static;letter-spacing:-0.37px">ARA KAT 970*570</span></div>
<div class="c" style="left:590px;width:95px;top:421px;text-align:right;height:21px">610,00</div>
<div class="c" style="left:693px;top:421px;height:21px">H</div>
<div class="c" style="left:743px;top:421px;height:21px">970</div>
<div class="c" style="left:779px;top:421px;height:21px">1140</div>
<div class="c" style="left:815px;top:421px;height:21px"><span style="position:static;letter-spacing:-0.08px">120-15-1207</span></div>
<div style="left:982px;top:427px;width:1px;height:9px;background:#8b0a0a"></div><div style="left:981px;top:427px;width:1px;height:9px;background:#f2e9a0"></div>
<div style="left:40px;top:464px;width:943px;height:1px;background:#a0a0a0"></div>
<div style="left:23px;top:464px;width:16px;height:1px;background:#e0e0e0"></div>
<div class="pb" style="left:42px;top:444px;height:19px"><div style="left:3px;top:8.200px;width:7px;height:1.600px;background:#181818"></div><div style="left:5.700px;top:6px;width:1.600px;height:6px;background:#181818"></div></div>
<div class="c" style="left:64px;top:443px;height:21px">000000013699508</div>
<div class="c" style="left:191px;width:105px;top:443px;text-align:right;height:21px"><span style="position:static;letter-spacing:-0.03px">03.01.2017</span></div>
<div class="c" style="left:304px;top:443px;height:21px">68018S1</div>
<div class="c" style="left:414px;top:443px;height:21px"><span style="position:static;letter-spacing:-0.38px">SEPARATÖR 150*570</span></div>
<div class="c" style="left:590px;width:95px;top:443px;text-align:right;height:21px">3360,00</div>
<div class="c" style="left:693px;top:443px;height:21px">H</div>
<div class="c" style="left:743px;top:443px;height:21px">480</div>
<div class="c" style="left:779px;top:443px;height:21px">600</div>
<div class="c" style="left:815px;top:443px;height:21px"><span style="position:static;letter-spacing:-0.08px">120-15-1207</span></div>
<div style="left:982px;top:449px;width:1px;height:9px;background:#8b0a0a"></div><div style="left:981px;top:449px;width:1px;height:9px;background:#f2e9a0"></div>
<div style="left:40px;top:486px;width:943px;height:1px;background:#a0a0a0"></div>
<div style="left:23px;top:486px;width:16px;height:1px;background:#e0e0e0"></div>
<div class="pb" style="left:42px;top:466px;height:19px"><div style="left:3px;top:8.200px;width:7px;height:1.600px;background:#181818"></div><div style="left:5.700px;top:6px;width:1.600px;height:6px;background:#181818"></div></div>
<div class="c" style="left:64px;top:465px;height:21px">000000013699509</div>
<div class="c" style="left:191px;width:105px;top:465px;text-align:right;height:21px"><span style="position:static;letter-spacing:-0.03px">03.01.2017</span></div>
<div class="c" style="left:304px;top:465px;height:21px">68018S2</div>
<div class="c" style="left:414px;top:465px;height:21px"><span style="position:static;letter-spacing:-0.38px">SEPARATÖR 150*970</span></div>
<div class="c" style="left:590px;width:95px;top:465px;text-align:right;height:21px">2620,00</div>
<div class="c" style="left:693px;top:465px;height:21px">H</div>
<div class="c" style="left:743px;top:465px;height:21px">480</div>
<div class="c" style="left:779px;top:465px;height:21px">1000</div>
<div class="c" style="left:815px;top:465px;height:21px"><span style="position:static;letter-spacing:-0.08px">120-15-1207</span></div>
<div style="left:982px;top:471px;width:1px;height:9px;background:#8b0a0a"></div><div style="left:981px;top:471px;width:1px;height:9px;background:#f2e9a0"></div>
<div class="pb" style="left:42px;top:488px;height:19px"><div style="left:3px;top:8.200px;width:7px;height:1.600px;background:#181818"></div><div style="left:5.700px;top:6px;width:1.600px;height:6px;background:#181818"></div></div>
<div class="c" style="left:64px;top:487px;height:20px">000000014227701</div>
<div class="c" style="left:191px;width:105px;top:487px;text-align:right;height:20px"><span style="position:static;letter-spacing:-0.03px">03.01.2017</span></div>
<div class="c" style="left:304px;top:487px;height:20px">68752A</div>
<div class="c" style="left:414px;top:487px;height:20px"><span style="position:static;letter-spacing:-0.37px">ARA KAT 350*550</span></div>
<div class="c" style="left:590px;width:95px;top:487px;text-align:right;height:20px">250,00</div>
<div class="c" style="left:693px;top:487px;height:20px">H</div>
<div class="c" style="left:743px;top:487px;height:20px">350</div>
<div class="c" style="left:779px;top:487px;height:20px">550</div>
<div class="c" style="left:815px;top:487px;height:20px"><span style="position:static;letter-spacing:-0.08px">120-15-1207</span></div>
<div style="left:982px;top:493px;width:1px;height:9px;background:#8b0a0a"></div><div style="left:981px;top:493px;width:1px;height:9px;background:#f2e9a0"></div>
<div style="left:41px;top:311px;width:19px;height:21px;border:1px solid #3399ff"></div>
<div style="left:983px;top:293px;width:17px;height:214px;background:#fff"></div>
<div style="left:984px;top:310px;width:16px;height:17px;background:#dcdcdc;border-top:1px solid #a6a6a6;border-bottom:1px solid #a6a6a6"></div>
<div style="left:983px;top:293px;width:1px;height:214px;background:#c4c4c4"></div>
<svg style="left:985.5px;top:296.5px" width="12" height="12" viewBox="-6 -6 12 12"><path d="M-3.500 1.750L0 -1.750L3.500 1.750" fill="none" stroke="#606060" stroke-width="1.400"/></svg>
<div style="left:983px;top:490px;width:17px;height:17px;border:1px solid #d4d4d4;border-right:none;border-bottom:none"></div>
<svg style="left:985.5px;top:492.5px" width="12" height="12" viewBox="-6 -6 12 12"><path d="M-3.500 -1.750L0 1.750L3.500 -1.750" fill="none" stroke="#606060" stroke-width="1.400"/></svg>
<div style="left:21px;top:507px;width:962px;height:17px;background:#fff;border-top:1px solid #a0a0a0"></div>
<div style="left:38px;top:508px;width:558px;height:16px;background:#dcdcdc;border-left:1px solid #b8b8b8;border-right:1px solid #b8b8b8"></div>
<svg style="left:24px;top:510px" width="12" height="12" viewBox="-6 -6 12 12"><path d="M1.750 -3.500L-1.750 0L1.750 3.500" fill="none" stroke="#606060" stroke-width="1.400"/></svg>
<div style="left:966px;top:508px;width:17px;height:16px;border-left:1px solid #d4d4d4;border-right:1px solid #d4d4d4"></div>
<svg style="left:968.5px;top:510px" width="12" height="12" viewBox="-6 -6 12 12"><path d="M-1.750 -3.500L1.750 0L-1.750 3.500" fill="none" stroke="#606060" stroke-width="1.400"/></svg>
<div style="left:314px;top:512px;width:1px;height:8px;background:#606060"></div>
<div style="left:316px;top:512px;width:1px;height:8px;background:#606060"></div>
<div style="left:318px;top:512px;width:1px;height:8px;background:#606060"></div>
<div style="left:983px;top:507px;width:17px;height:17px;background:#f0f0f0"></div>
<div class="grid" style="left:21px;top:541px;width:981px;height:166px"></div>
<div style="left:22px;top:542px;width:962px;height:17px;background:#fbfbfb"></div>
<div style="left:22px;top:559px;width:978px;height:1px;background:#a0a0a0"></div>
<div style="left:22px;top:560px;width:19px;height:129px;background:#fbfbfb"></div>
<div style="left:23px;top:561px;width:1px;height:128px;background:#ececec"></div>
<div style="left:41px;top:543px;width:1px;height:16px;background:#d8d8d8"></div>
<div style="left:41px;top:560px;width:1px;height:129px;background:#a0a0a0"></div>
<div style="left:61px;top:543px;width:1px;height:16px;background:#d8d8d8"></div>
<div style="left:61px;top:560px;width:1px;height:129px;background:#a0a0a0"></div>
<div class="gt" style="left:46.5px;top:544px;width:14.5px;font-size:12px">O</div>
<div style="left:211px;top:543px;width:1px;height:16px;background:#d8d8d8"></div>
<div style="left:211px;top:560px;width:1px;height:129px;background:#a0a0a0"></div>
<div class="gt" style="left:67px;top:544px;width:144px;font-size:12px"><span style="position:static;letter-spacing:-0.08px">StokKodu</span></div>
<div style="left:411px;top:543px;width:1px;height:16px;background:#d8d8d8"></div>
<div style="left:411px;top:560px;width:1px;height:129px;background:#a0a0a0"></div>
<div class="gt" style="left:217px;top:544px;width:194px;font-size:12px"><span style="position:static;letter-spacing:-0.57px">Cinsi</span></div>
<div style="left:461px;top:543px;width:1px;height:16px;background:#d8d8d8"></div>
<div style="left:461px;top:560px;width:1px;height:129px;background:#a0a0a0"></div>
<div class="gt" style="left:417px;top:544px;width:44px;font-size:12px"><span style="position:static;letter-spacing:0.82px">G/C</span></div>
<div style="left:511px;top:543px;width:1px;height:16px;background:#d8d8d8"></div>
<div style="left:511px;top:560px;width:1px;height:129px;background:#a0a0a0"></div>
<div class="gt" style="left:467px;top:544px;width:44px;font-size:12px"><span style="position:static;letter-spacing:-0.07px">Miktar</span></div>
<div style="left:631px;top:543px;width:1px;height:16px;background:#d8d8d8"></div>
<div style="left:631px;top:560px;width:1px;height:129px;background:#a0a0a0"></div>
<div class="gt" style="left:517px;top:544px;width:114px;font-size:12px"><span style="position:static;letter-spacing:-0.34px">Aciklama</span></div>
<div style="left:706px;top:543px;width:1px;height:16px;background:#d8d8d8"></div>
<div style="left:706px;top:560px;width:1px;height:129px;background:#a0a0a0"></div>
<div class="gt" style="left:637px;top:544px;width:69px;font-size:12px"><span style="position:static;letter-spacing:-0.42px">KutuTipi</span></div>
<div style="left:756px;top:543px;width:1px;height:16px;background:#d8d8d8"></div>
<div style="left:756px;top:560px;width:1px;height:129px;background:#a0a0a0"></div>
<div class="gt" style="left:712px;top:544px;width:44px;font-size:12px"><span style="position:static;letter-spacing:-0.35px">Kalitesi</span></div>
<div style="left:806px;top:543px;width:1px;height:16px;background:#d8d8d8"></div>
<div style="left:806px;top:560px;width:1px;height:129px;background:#a0a0a0"></div>
<div class="gt" style="left:762px;top:544px;width:44px;font-size:12px"><span style="position:static;letter-spacing:-0.24px">Dalga</span></div>
<div style="left:856px;top:543px;width:1px;height:16px;background:#d8d8d8"></div>
<div style="left:856px;top:560px;width:1px;height:129px;background:#a0a0a0"></div>
<div class="gt" style="left:812px;top:544px;width:44px;font-size:12px"><span style="position:static;letter-spacing:-0.82px">En</span></div>
<div style="left:906px;top:543px;width:1px;height:16px;background:#d8d8d8"></div>
<div style="left:906px;top:560px;width:1px;height:129px;background:#a0a0a0"></div>
<div class="gt" style="left:862px;top:544px;width:44px;font-size:12px"><span style="position:static;letter-spacing:-0.96px">Boy</span></div>
<div style="left:41px;top:581px;width:943px;height:1px;background:#a0a0a0"></div>
<div style="left:24px;top:581px;width:16px;height:1px;background:#e0e0e0"></div>
<div class="pb" style="left:43px;top:561px;height:19px"><div style="left:3px;top:8.200px;width:7px;height:1.600px;background:#181818"></div><div style="left:5.700px;top:6px;width:1.600px;height:6px;background:#181818"></div></div>
<div style="left:41px;top:603px;width:943px;height:1px;background:#a0a0a0"></div>
<div style="left:24px;top:603px;width:16px;height:1px;background:#e0e0e0"></div>
<div class="pb" style="left:43px;top:583px;height:19px"><div style="left:3px;top:8.200px;width:7px;height:1.600px;background:#181818"></div><div style="left:5.700px;top:6px;width:1.600px;height:6px;background:#181818"></div></div>
<div style="left:41px;top:625px;width:943px;height:1px;background:#a0a0a0"></div>
<div style="left:24px;top:625px;width:16px;height:1px;background:#e0e0e0"></div>
<div class="pb" style="left:43px;top:605px;height:19px"><div style="left:3px;top:8.200px;width:7px;height:1.600px;background:#181818"></div><div style="left:5.700px;top:6px;width:1.600px;height:6px;background:#181818"></div></div>
<div style="left:41px;top:647px;width:943px;height:1px;background:#a0a0a0"></div>
<div style="left:24px;top:647px;width:16px;height:1px;background:#e0e0e0"></div>
<div class="pb" style="left:43px;top:627px;height:19px"><div style="left:3px;top:8.200px;width:7px;height:1.600px;background:#181818"></div><div style="left:5.700px;top:6px;width:1.600px;height:6px;background:#181818"></div></div>
<div style="left:41px;top:669px;width:943px;height:1px;background:#a0a0a0"></div>
<div style="left:24px;top:669px;width:16px;height:1px;background:#e0e0e0"></div>
<div class="pb" style="left:43px;top:649px;height:19px"><div style="left:3px;top:8.200px;width:7px;height:1.600px;background:#181818"></div><div style="left:5.700px;top:6px;width:1.600px;height:6px;background:#181818"></div></div>
<div class="pb" style="left:43px;top:671px;height:18px"><div style="left:3px;top:8.200px;width:7px;height:1.600px;background:#181818"></div><div style="left:5.700px;top:6px;width:1.600px;height:6px;background:#181818"></div></div>
<div style="left:42px;top:560px;width:19px;height:21px;border:1px solid #3399ff"></div>
<div style="left:984px;top:542px;width:17px;height:147px;background:#fff"></div>
<div style="left:985px;top:559px;width:16px;height:17px;background:#dcdcdc;border-top:1px solid #a6a6a6;border-bottom:1px solid #a6a6a6"></div>
<div style="left:984px;top:542px;width:1px;height:147px;background:#c4c4c4"></div>
<svg style="left:986.5px;top:545.5px" width="12" height="12" viewBox="-6 -6 12 12"><path d="M-3.500 1.750L0 -1.750L3.500 1.750" fill="none" stroke="#606060" stroke-width="1.400"/></svg>
<div style="left:984px;top:672px;width:17px;height:17px;border:1px solid #d4d4d4;border-right:none;border-bottom:none"></div>
<svg style="left:986.5px;top:674.5px" width="12" height="12" viewBox="-6 -6 12 12"><path d="M-3.500 -1.750L0 1.750L3.500 -1.750" fill="none" stroke="#606060" stroke-width="1.400"/></svg>
<div style="left:22px;top:689px;width:962px;height:17px;background:#fff;border-top:1px solid #a0a0a0"></div>
<div style="left:39px;top:690px;width:905px;height:16px;background:#dcdcdc;border-left:1px solid #b8b8b8;border-right:1px solid #b8b8b8"></div>
<svg style="left:25px;top:692px" width="12" height="12" viewBox="-6 -6 12 12"><path d="M1.750 -3.500L-1.750 0L1.750 3.500" fill="none" stroke="#606060" stroke-width="1.400"/></svg>
<div style="left:967px;top:690px;width:17px;height:16px;border-left:1px solid #d4d4d4;border-right:1px solid #d4d4d4"></div>
<svg style="left:969.5px;top:692px" width="12" height="12" viewBox="-6 -6 12 12"><path d="M-1.750 -3.500L1.750 0L-1.750 3.500" fill="none" stroke="#606060" stroke-width="1.400"/></svg>
<div style="left:488px;top:694px;width:1px;height:8px;background:#606060"></div>
<div style="left:490px;top:694px;width:1px;height:8px;background:#606060"></div>
<div style="left:492px;top:694px;width:1px;height:8px;background:#606060"></div>
<div style="left:984px;top:689px;width:17px;height:17px;background:#f0f0f0"></div>
<div class="gt" style="left:912px;top:544px;width:70px;font-size:12px"><span style="position:static;letter-spacing:-0.24px">Yükseklik</span></div>
<div id="status">
<span class="st" style="left:12.6px;letter-spacing:-1.03px">User</span>
<span class="st" style="left:39.6px;letter-spacing:0.00px">:</span>
<span class="st" style="left:52.0px;letter-spacing:-0.09px">Admin</span>
<span class="st" style="left:130.0px;letter-spacing:-1.29px">Server</span>
<span class="st" style="left:165.0px;letter-spacing:0.00px">:</span>
<span class="st" style="left:269.7px;letter-spacing:-0.99px">Şirket</span>
<span class="st" style="left:301.6px;letter-spacing:0.00px">:</span>
<span class="st" style="left:178.500px;width:3px;overflow:hidden">c</span><span class="st" style="left:315.500px;width:4px;overflow:hidden">C</span>
<div style="left:380px;top:8px;width:1px;height:1px;background:#5aa0e0"></div><div style="left:380px;top:11px;width:1px;height:2px;background:#5aa0e0"></div>
<div style="left:1011px;top:16px;width:2px;height:2px;background:#a8a8a8"></div>
<div style="left:1007px;top:16px;width:2px;height:2px;background:#a8a8a8"></div>
<div style="left:1003px;top:16px;width:2px;height:2px;background:#a8a8a8"></div>
<div style="left:1011px;top:12px;width:2px;height:2px;background:#a8a8a8"></div>
<div style="left:1007px;top:12px;width:2px;height:2px;background:#a8a8a8"></div>
<div style="left:1011px;top:8px;width:2px;height:2px;background:#a8a8a8"></div>
</div>
</div>
</body></html>
